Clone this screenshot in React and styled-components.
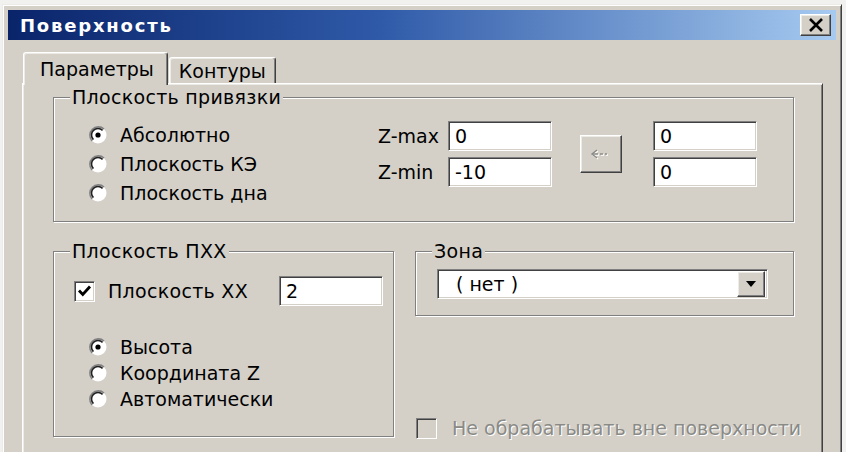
import React from "react";
import styled, { createGlobalStyle } from "styled-components";

const face = "#d4d0c8";

const GlobalStyle = createGlobalStyle`
  html, body {
    margin: 0;
    padding: 0;
    background: #f1f1ef;
    overflow: hidden;
  }
  body {
    font-family: "DejaVu Sans", "Liberation Sans", sans-serif;
    color: #000;
  }
`;

const Window = styled.div`
  margin: 4px 0 0 2px;
  width: 840px;
  height: 470px;
  box-sizing: border-box;
  background: ${face};
  border: 1px solid;
  border-color: #ecebe6 #404040 #404040 #ecebe6;
  box-shadow: inset 1px 1px #fff, inset -1px -1px #808080;
  padding: 5px;
`;

const TitleBar = styled.div`
  height: 30px;
  display: flex;
  align-items: center;
  justify-content: space-between;
  padding: 0 5px 0 12px;
  background: linear-gradient(to right, #0a246a 0%, #2f5aa8 45%, #a6caf0 100%);
`;

const Title = styled.span`
  color: #fff;
  font-weight: bold;
  font-size: 18px;
  letter-spacing: 1.8px;
`;

const RaisedButton = styled.div`
  box-sizing: border-box;
  display: flex;
  align-items: center;
  justify-content: center;
  background: ${face};
  border: 1px solid;
  border-color: #fff #404040 #404040 #fff;
  box-shadow: inset -1px -1px #808080, inset 1px 1px #ecebe6;
  width: ${(p) => p.$w}px;
  height: ${(p) => p.$h}px;
  flex-shrink: 0;
`;

const Body = styled.div`
  padding: 12px 13px 0 14px;
`;

const TabRow = styled.div`
  display: flex;
  align-items: flex-end;
  position: relative;
  z-index: 1;
  margin-bottom: -2px;
  height: 33px;
`;

const Tab = styled.div`
  box-sizing: border-box;
  height: ${(p) => (p.$active ? 33 : 26)}px;
  margin-bottom: ${(p) => (p.$active ? 0 : 2)}px;
  margin-left: 1px;
  padding: 0 ${(p) => (p.$active ? 13 : 9)}px 0 ${(p) => (p.$active ? 16 : 9)}px;
  display: flex;
  align-items: center;
  font-size: 19px;
  background: ${face};
  border: 1px solid;
  border-bottom: none;
  border-color: #fff #404040 #404040 #fff;
  border-radius: 3px 3px 0 0;
  box-shadow: inset -1px 0 #808080, inset 1px 1px #ecebe6;
`;

const Panel = styled.div`
  box-sizing: border-box;
  height: 400px;
  border: 1px solid;
  border-color: #fff #404040 #404040 #fff;
  box-shadow: inset 1px 1px #ecebe6, inset -1px -1px #808080;
  padding: 3px 28px 0 30px;
`;

const Group = styled.fieldset`
  margin: 0;
  padding: 0;
  min-width: 0;
  border: 1px solid #808080;
  box-shadow: inset 1px 1px #fff, 1px 1px #fff;
  width: ${(p) => (p.$w ? `${p.$w}px` : "auto")};
  box-sizing: border-box;
`;

const Legend = styled.legend`
  margin-left: 16px;
  padding: 0 2px;
  font-size: 19px;
  letter-spacing: 0.3px;
  line-height: 20px;
  background: ${face};
`;

const AnchorContent = styled.div`
  display: flex;
  align-items: flex-start;
  padding: 13px 0 14px 34px;
`;

const RadioList = styled.div`
  display: flex;
  flex-direction: column;
  width: ${(p) => (p.$w ? `${p.$w}px` : "auto")};
  margin-left: ${(p) => p.$indent || 0}px;
`;

const RadioRow = styled.label`
  display: flex;
  align-items: center;
  gap: 12px;
  height: ${(p) => p.$h}px;
  font-size: 19px;
`;

const ZGrid = styled.div`
  display: grid;
  grid-template-columns: 70px 132px 73px 104px;
  grid-template-rows: 30px 30px;
  row-gap: 6px;
  margin-top: 1px;
`;

const ZLabel = styled.span`
  font-size: 19px;
  align-self: center;
  white-space: nowrap;
`;

const Field = styled.div`
  box-sizing: border-box;
  display: flex;
  align-items: center;
  background: #fff;
  border: 1px solid;
  border-color: #808080 #fff #fff #808080;
  box-shadow: inset 1px 1px #404040, inset -1px -1px ${face};
  padding-left: ${(p) => p.$pad || 6}px;
  width: ${(p) => p.$w}px;
  height: ${(p) => p.$h || 30}px;
  font-size: 19px;
`;

const ArrowCell = styled.div`
  grid-row: 1 / span 2;
  grid-column: 3;
  align-self: center;
`;

const LowerRow = styled.div`
  display: flex;
  gap: 21px;
  margin-top: 19px;
`;

const PxxContent = styled.div`
  padding: 15px 10px 24px 20px;
`;

const CheckRow = styled.div`
  display: flex;
  align-items: center;
  gap: 13px;
  font-size: 19px;
  letter-spacing: 0.3px;
  height: 30px;
  margin-bottom: 28px;
  & > :last-child {
    margin-left: auto;
  }
`;

const CheckBox = styled.div`
  box-sizing: border-box;
  width: 21px;
  height: 21px;
  flex-shrink: 0;
  display: flex;
  align-items: center;
  justify-content: center;
  background: ${(p) => (p.$disabled ? face : "#fff")};
  border: 1px solid;
  border-color: #808080 #fff #fff #808080;
  box-shadow: inset 1px 1px #404040, inset -1px -1px ${face};
`;

const RightColumn = styled.div`
  flex: 1;
  min-width: 0;
  display: flex;
  flex-direction: column;
  justify-content: space-between;
`;

const ZoneContent = styled.div`
  padding: 8px 25px 16px 21px;
`;

const Combo = styled(Field)`
  width: auto;
  padding: 0 2px 0 18px;
  justify-content: space-between;
`;

const DisabledRow = styled.div`
  display: flex;
  align-items: center;
  gap: 15px;
  margin: 0 0 -3px 1px;
  font-size: 19px;
  color: #8a8a86;
  text-shadow: 1px 1px #fff;
  white-space: nowrap;
  height: 24px;
`;

const Radio = ({ checked }) => (
  <svg width="20" height="20" viewBox="0 0 20 20">
    <circle cx="10" cy="10" r="8.5" fill="#fff" />
    <path d="M4 16 A8.5 8.5 0 0 1 16 4" stroke="#808080" strokeWidth="1.6" fill="none" />
    <path d="M5.4 14.6 A6.5 6.5 0 0 1 14.6 5.4" stroke="#202020" strokeWidth="1.6" fill="none" />
    {checked && <circle cx="10" cy="10" r="2.6" fill="#000" />}
  </svg>
);

const Check = () => (
  <svg width="15" height="14" viewBox="0 0 15 14">
    <path d="M2 6.5 L5.8 10.5 L13 2.5" stroke="#000" strokeWidth="2.8" fill="none" />
  </svg>
);

const CloseIcon = () => (
  <svg width="16" height="14" viewBox="0 0 16 14">
    <path d="M2 1 L14 13 M14 1 L2 13" stroke="#000" strokeWidth="2.6" />
  </svg>
);

const ArrowIcon = () => (
  <svg width="24" height="14" viewBox="0 0 24 14">
    <g stroke="#fff" strokeWidth="1.4" fill="none" transform="translate(1 1)">
      <path d="M8 3 L3 7 L8 11" />
      <path d="M4 7 H9 M11 7 H14 M16 7 H18" />
    </g>
    <g stroke="#8a8a86" strokeWidth="1.4" fill="none">
      <path d="M8 3 L3 7 L8 11" />
      <path d="M4 7 H9 M11 7 H14 M16 7 H18" />
    </g>
  </svg>
);

const DownTriangle = () => (
  <svg width="12" height="7" viewBox="0 0 12 7">
    <path d="M1 0 H11 L6 6 Z" fill="#000" />
  </svg>
);

const App = () => {
  return (
    <>
      <GlobalStyle />
      <Window>
        <TitleBar>
          <Title>Поверхность</Title>
          <RaisedButton $w={31} $h={22}>
            <CloseIcon />
          </RaisedButton>
        </TitleBar>

        <Body>
          <TabRow>
            <Tab $active>Параметры</Tab>
            <Tab>Контуры</Tab>
          </TabRow>

          <Panel>
            <Group>
              <Legend>Плоскость привязки</Legend>
              <AnchorContent>
                <RadioList $w={290}>
                  <RadioRow $h={29}>
                    <Radio checked />
                    Абсолютно
                  </RadioRow>
                  <RadioRow $h={29}>
                    <Radio />
                    Плоскость КЭ
                  </RadioRow>
                  <RadioRow $h={29}>
                    <Radio />
                    Плоскость дна
                  </RadioRow>
                </RadioList>

                <ZGrid>
                  <ZLabel>Z-max</ZLabel>
                  <Field $w={104}>0</Field>
                  <ArrowCell>
                    <RaisedButton $w={42} $h={38}>
                      <ArrowIcon />
                    </RaisedButton>
                  </ArrowCell>
                  <Field $w={104}>0</Field>
                  <ZLabel>Z-min</ZLabel>
                  <Field $w={104}>-10</Field>
                  <Field $w={104}>0</Field>
                </ZGrid>
              </AnchorContent>
            </Group>

            <LowerRow>
              <Group $w={341}>
                <Legend>Плоскость ПХХ</Legend>
                <PxxContent>
                  <CheckRow>
                    <CheckBox>
                      <Check />
                    </CheckBox>
                    Плоскость XX
                    <Field $w={104}>2</Field>
                  </CheckRow>
                  <RadioList $indent={14}>
                    <RadioRow $h={26}>
                      <Radio checked />
                      Высота
                    </RadioRow>
                    <RadioRow $h={26}>
                      <Radio />
                      Координата Z
                    </RadioRow>
                    <RadioRow $h={26}>
                      <Radio />
                      Автоматически
                    </RadioRow>
                  </RadioList>
                </PxxContent>
              </Group>

              <RightColumn>
                <Group>
                  <Legend>Зона</Legend>
                  <ZoneContent>
                    <Combo>
                      ( нет )
                      <RaisedButton $w={28} $h={26}>
                        <DownTriangle />
                      </RaisedButton>
                    </Combo>
                  </ZoneContent>
                </Group>

                <DisabledRow>
                  <CheckBox $disabled />
                  Не обрабатывать вне поверхности
                </DisabledRow>
              </RightColumn>
            </LowerRow>
          </Panel>
        </Body>
      </Window>
    </>
  );
};

export default App;
